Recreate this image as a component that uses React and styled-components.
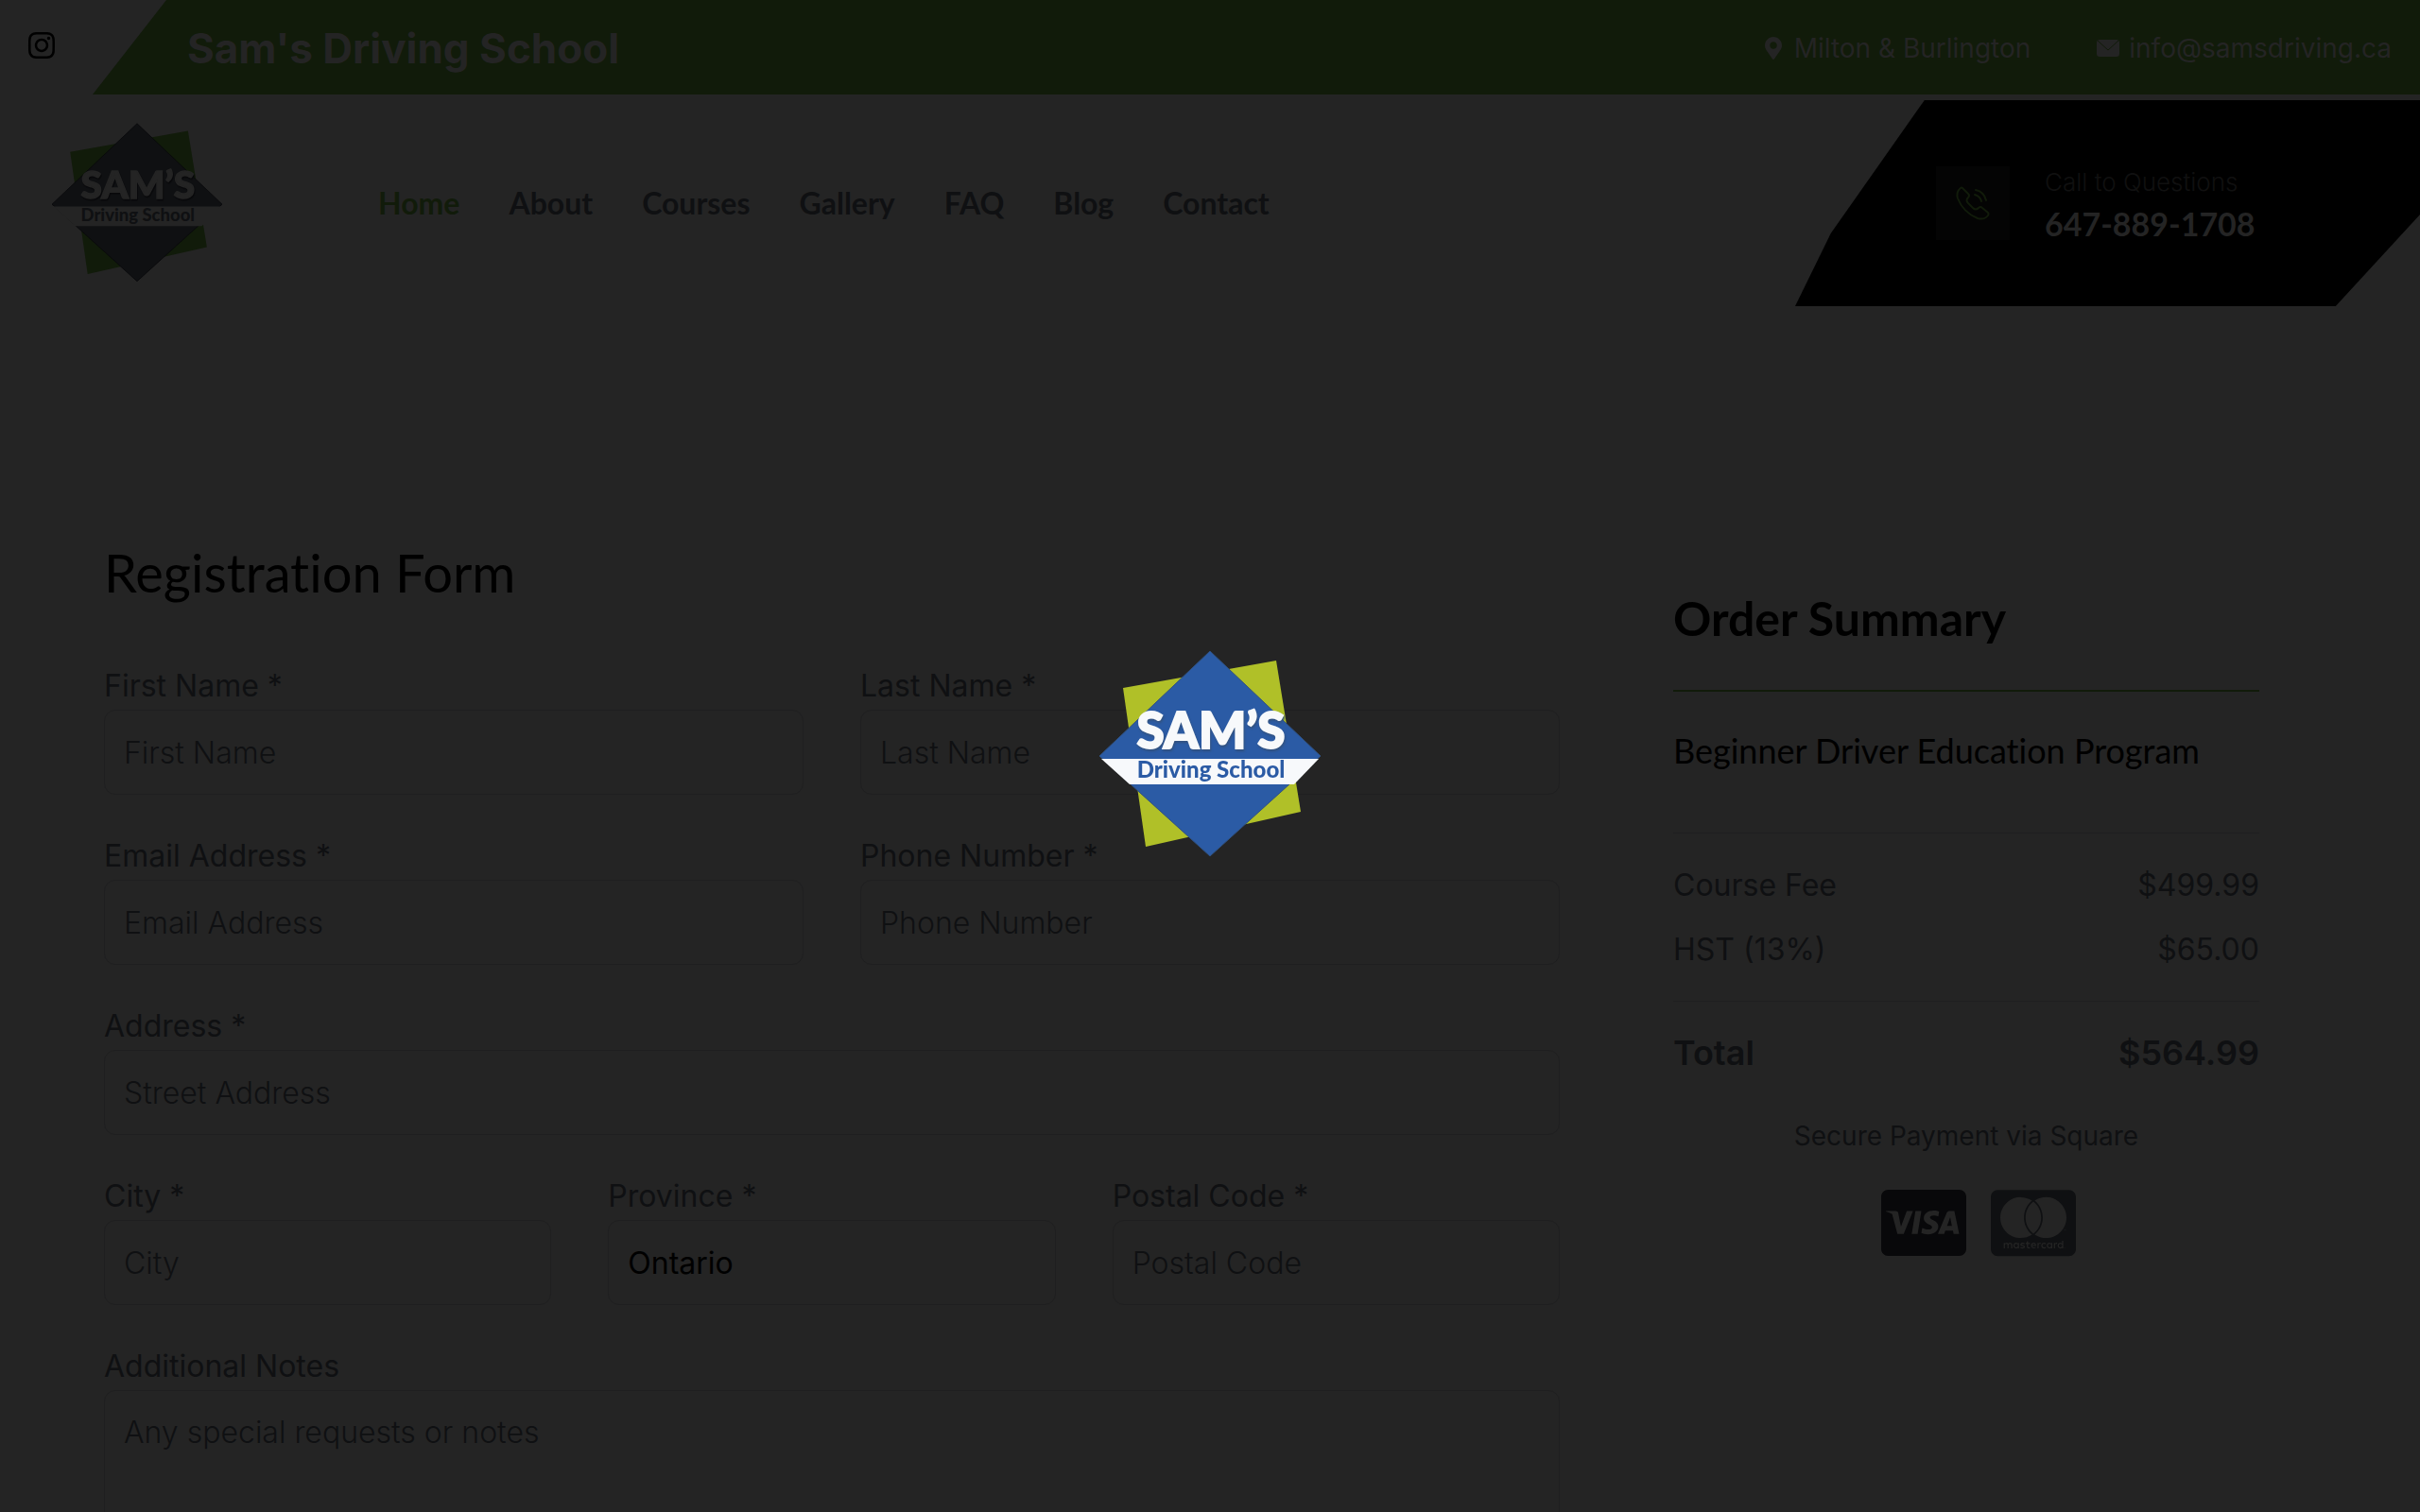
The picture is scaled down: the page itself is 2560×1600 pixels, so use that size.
import React, { useId } from 'react';
import styled, { createGlobalStyle, css } from 'styled-components';
import { FaCcMastercard, FaCcVisa, FaMapMarkerAlt } from 'react-icons/fa';
import { FaInstagram } from 'react-icons/fa6';

const colors = {
  page: '#242424',
  green: '#111b0a',
  text: '#0f1012',
  black: '#000',
  border: '#1f1f20',
};

const body = css`
  font-family: Inter, 'Liberation Sans', sans-serif;
`;

const display = css`
  font-family: Lato, 'Liberation Sans', sans-serif;
  font-variant-ligatures: none;
`;

const GlobalStyle = createGlobalStyle`
  *, *::before, *::after {
    box-sizing: border-box;
  }

  body {
    margin: 0;
    background: ${colors.page};
    color: ${colors.text};
    font-family: Inter, 'Liberation Sans', sans-serif;
  }

  a {
    color: inherit;
    text-decoration: none;
  }
`;

const Page = styled.div`
  height: 100vh;
  overflow: hidden;
`;

const TopBar = styled.div`
  display: flex;
  height: 100px;
`;

const Social = styled.a`
  width: 98px;
  flex: none;
  padding: 32px 28px;
  font-size: 32px;
  line-height: 1;
  color: ${colors.black};

  svg {
    display: block;
  }
`;

const TopBanner = styled.div`
  display: flex;
  flex: 1;
  align-items: center;
  justify-content: space-between;
  padding: 2px 30px 0 100px;
  background: ${colors.green};
  color: ${colors.page};
  clip-path: polygon(78px 0, 100% 0, 100% 100%, 0 100%);
`;

const SchoolName = styled.h1`
  margin: 0;
  font-size: 44px;
  line-height: 56px;
  font-weight: 700;
`;

const ContactList = styled.div`
  display: flex;
  gap: 70px;
`;

const ContactItem = styled.a`
  display: flex;
  align-items: center;
  gap: 10px;
  font-size: 28px;
  line-height: 40px;
  font-weight: 400;

  svg {
    width: 24px;
    height: 24px;
  }
`;

const Header = styled.header`
  display: flex;
  justify-content: space-between;
  padding-top: 6px;
`;

const HeaderLeft = styled.div`
  display: flex;
  align-items: center;
  gap: 165px;
  padding-left: 55px;
`;

const Nav = styled.nav`
  display: flex;
  gap: 52px;
`;

const NavLink = styled.a`
  ${display}
  font-size: 32px;
  line-height: 40px;
  font-weight: 700;
  color: ${({ $active }) => ($active ? colors.green : colors.text)};
`;

const CallPanel = styled.div`
  display: flex;
  width: 661px;
  height: 218px;
  align-items: center;
  gap: 37px;
  padding-left: 149px;
  background: ${colors.black};
  clip-path: polygon(20.7% 0, 100% 0, 100% 55.5%, 86.5% 100%, 0 100%, 5.7% 64.7%);
`;

const CallIcon = styled.div`
  display: flex;
  width: 78px;
  height: 78px;
  align-items: center;
  justify-content: center;
  background: #040404;
  color: ${colors.green};
`;

const CallLabel = styled.p`
  margin: 0;
  font-size: 26px;
  line-height: 44px;
  font-weight: 300;
  color: #101010;
`;

const CallNumber = styled.a`
  ${display}
  display: block;
  font-size: 34px;
  line-height: 44px;
  font-weight: 700;
  color: ${colors.page};
`;

const Main = styled.main`
  display: flex;
  max-width: 2400px;
  margin: 0 auto;
  padding-top: 246px;
`;

const FormColumn = styled.div`
  flex: 0 0 66.6667%;
  padding: 0 30px;
`;

const SummaryColumn = styled.aside`
  flex: 0 0 33.3333%;
  padding: 52px 90px 0;
`;

const FormTitle = styled.h2`
  ${display}
  margin: 0 0 59px;
  font-size: 56px;
  line-height: 72px;
  font-weight: 400;
  color: ${colors.black};
`;

const Row = styled.div`
  display: grid;
  grid-template-columns: repeat(${({ $cols }) => $cols || 1}, 1fr);
  gap: 60px;
  margin-bottom: 40px;
`;

const Label = styled.label`
  display: block;
  font-size: 32px;
  line-height: 50px;
`;

const control = css`
  ${body}
  display: block;
  width: 100%;
  height: 90px;
  margin: 0;
  padding: 20px;
  border: 1px solid ${colors.border};
  border-radius: 12px;
  outline: 0;
  background: transparent;
  color: ${colors.black};
  font-size: 32px;
  line-height: 48px;

  &::placeholder {
    color: ${colors.text};
    font-weight: 300;
    opacity: 1;
  }
`;

const Input = styled.input`
  ${control}
`;

const TextArea = styled.textarea`
  ${control}
  height: 240px;
  resize: none;
`;

const SummaryTitle = styled.h3`
  ${display}
  margin: 0 0 44px;
  font-size: 50px;
  line-height: 64px;
  font-weight: 700;
  color: ${colors.black};
`;

const Rule = styled.hr`
  margin: 0;
  border: 0;
  border-top: ${({ $accent }) =>
    $accent ? `2px solid ${colors.green}` : `1px solid ${colors.border}`};
`;

const CourseName = styled.h4`
  ${display}
  margin: 0;
  padding: 38px 0 63px;
  font-size: 36px;
  line-height: 48px;
  font-weight: 400;
  color: ${colors.black};
`;

const Fees = styled.div`
  display: grid;
  gap: 20px;
  padding: 31px 0 30px;
`;

const FeeLine = styled.div`
  display: flex;
  justify-content: space-between;
  font-size: ${({ $total }) => ($total ? 36 : 32)}px;
  line-height: 48px;
  font-weight: ${({ $total }) => ($total ? 600 : 400)};
  padding-top: ${({ $total }) => ($total ? 30 : 0)}px;
`;

const SecureNote = styled.p`
  margin: 44px 0 32px;
  font-size: 28px;
  line-height: 40px;
  text-align: center;
`;

const Cards = styled.div`
  display: flex;
  justify-content: center;
  gap: 26px;
  padding-left: 26px;

  svg {
    width: 90px;
    height: 80px;
  }
`;

const Loader = styled.div`
  position: fixed;
  inset: 0;
  display: flex;
  align-items: center;
  justify-content: center;
  padding-bottom: 4px;
  pointer-events: none;
`;

const LogoSvg = styled.svg`
  display: block;
  width: ${({ $width }) => $width}px;
  height: auto;
`;

const LogoName = styled.text`
  filter: drop-shadow(1px 2px 1px ${({ $shadow }) => $shadow});
`;

const Logo = ({ width, blue, green, light, ink, shadow }) => (
  <LogoSvg $width={width} viewBox="0 0 234 220" role="img" aria-label="Sam's Driving School">
    <path d="M25 40 L187 11 L213 171 L49 208 Z" fill={green} />
    <path d="M117 1 L234 112 L117 218 L0 112 Z" fill={blue} stroke={shadow} strokeWidth="1" />
    <path d="M2 115 H232 L206 142 H32 Z" fill={light} />
    <g fontFamily="Lato, 'Liberation Sans', sans-serif" fontWeight="900" textAnchor="middle">
      <LogoName
        x="118"
        y="104"
        fontSize="53"
        fill={light}
        stroke={light}
        strokeWidth="2"
        $shadow={shadow}
      >
        SAM’S
      </LogoName>
      <text x="118" y="135" fontSize="24" fill={ink}>
        Driving School
      </text>
    </g>
  </LogoSvg>
);

const PhoneIcon = () => (
  <svg width="36" height="36" viewBox="0 0 36 36" fill="none" stroke="currentColor" strokeWidth="2" strokeLinecap="round" strokeLinejoin="round">
    <path d="M7 2 L13 8 Q15 10 13 12 Q10 15 13 18 L18 23 Q21 26 24 23 Q26 21 28 23 L34 28 Q35 29 34 31 Q30 36 23 34 Q8 28 2 13 Q0 6 5 2 Q6 1 7 2 Z" />
    <path d="M21 4 Q30 6 32 15" />
    <path d="M20 9 Q26 11 27 16" />
  </svg>
);

const MailIcon = () => (
  <svg viewBox="0 0 24 24">
    <rect x="0" y="3" width="24" height="18" rx="3" fill="currentColor" />
    <path d="M1 4 L12 14 L23 4" fill="none" stroke={colors.green} strokeWidth="1" />
  </svg>
);

const Field = ({ label, placeholder, value, as: Control = Input, type = 'text' }) => {
  const id = useId();
  return (
    <div>
      <Label htmlFor={id}>{label}</Label>
      <Control
        id={id}
        type={Control === Input ? type : undefined}
        placeholder={placeholder}
        defaultValue={value}
      />
    </div>
  );
};

const links = ['Home', 'About', 'Courses', 'Gallery', 'FAQ', 'Blog', 'Contact'];

export default function App() {
  return (
    <Page>
      <GlobalStyle />
      <TopBar>
        <Social href="#instagram" aria-label="Instagram">
          <FaInstagram />
        </Social>
        <TopBanner>
          <SchoolName>Sam's Driving School</SchoolName>
          <ContactList>
            <ContactItem href="#locations">
              <FaMapMarkerAlt />
              Milton &amp; Burlington
            </ContactItem>
            <ContactItem href="mailto:info@samsdriving.ca">
              <MailIcon />
              info@samsdriving.ca
            </ContactItem>
          </ContactList>
        </TopBanner>
      </TopBar>

      <Header>
        <HeaderLeft>
          <a href="#home">
            <Logo
              width={180}
              blue={colors.text}
              green={colors.green}
              light={colors.page}
              ink={colors.text}
              shadow="#08080a"
            />
          </a>
          <Nav>
            {links.map((link, i) => (
              <NavLink key={link} href={`#${link.toLowerCase()}`} $active={i === 0}>
                {link}
              </NavLink>
            ))}
          </Nav>
        </HeaderLeft>
        <CallPanel>
          <CallIcon>
            <PhoneIcon />
          </CallIcon>
          <div>
            <CallLabel>Call to Questions</CallLabel>
            <CallNumber href="tel:6478891708">647-889-1708</CallNumber>
          </div>
        </CallPanel>
      </Header>

      <Main>
        <FormColumn>
          <FormTitle>Registration Form</FormTitle>
          <form>
            <Row $cols={2}>
              <Field label="First Name *" placeholder="First Name" />
              <Field label="Last Name *" placeholder="Last Name" />
            </Row>
            <Row $cols={2}>
              <Field label="Email Address *" placeholder="Email Address" type="email" />
              <Field label="Phone Number *" placeholder="Phone Number" type="tel" />
            </Row>
            <Row>
              <Field label="Address *" placeholder="Street Address" />
            </Row>
            <Row $cols={3}>
              <Field label="City *" placeholder="City" />
              <Field label="Province *" value="Ontario" />
              <Field label="Postal Code *" placeholder="Postal Code" />
            </Row>
            <Row>
              <Field
                label="Additional Notes"
                placeholder="Any special requests or notes"
                as={TextArea}
              />
            </Row>
          </form>
        </FormColumn>

        <SummaryColumn>
          <SummaryTitle>Order Summary</SummaryTitle>
          <Rule $accent />
          <CourseName>Beginner Driver Education Program</CourseName>
          <Rule />
          <Fees>
            <FeeLine>
              <span>Course Fee</span>
              <span>$499.99</span>
            </FeeLine>
            <FeeLine>
              <span>HST (13%)</span>
              <span>$65.00</span>
            </FeeLine>
          </Fees>
          <Rule />
          <FeeLine $total>
            <span>Total</span>
            <span>$564.99</span>
          </FeeLine>
          <SecureNote>Secure Payment via Square</SecureNote>
          <Cards>
            <FaCcVisa color="#08080a" />
            <FaCcMastercard />
          </Cards>
        </SummaryColumn>
      </Main>

      <Loader>
        <Logo
          width={234}
          blue="#2b5ba5"
          green="#b0c028"
          light="#f7f9fb"
          ink="#2b5ba5"
          shadow="#31517e"
        />
      </Loader>
    </Page>
  );
}
